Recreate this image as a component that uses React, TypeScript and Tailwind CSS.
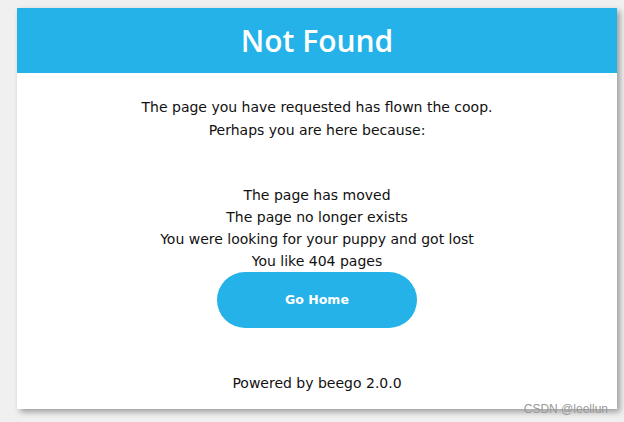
import React from 'react';

const reasons = [
  'The page has moved',
  'The page no longer exists',
  'You were looking for your puppy and got lost',
  'You like 404 pages',
];

const App = () => {
  return (
    <div className="relative h-[422px] w-[624px] overflow-hidden bg-[#f0f0f0] pt-[8px] pl-[17px] font-['DejaVu_Sans',sans-serif] text-[#111]">
      <div className="w-[600px] h-[401px] bg-white shadow-[3px_3px_6px_rgba(0,0,0,0.35)]">
        <div className="h-[65px] bg-[#24b2e9] flex items-center justify-center">
          <h1 className="text-[30px] font-semibold text-white font-['Open_Sans',sans-serif] leading-none">
            Not Found
          </h1>
        </div>
        <div className="flex flex-col items-center text-[14px]">
          <p className="mt-[23px] leading-[23px] text-center">
            The page you have requested has flown the coop.
            <br />
            Perhaps you are here because:
          </p>
          <ul className="mt-[42px] leading-[22px] text-center">
            {reasons.map((r) => (
              <li key={r}>{r}</li>
            ))}
          </ul>
          <button className="h-[56px] w-[200px] rounded-full bg-[#24b2e9] text-white text-[12.5px] font-bold">
            Go Home
          </button>
          <p className="mt-[44px] leading-[22px]">Powered by beego 2.0.0</p>
        </div>
      </div>
      <span className="absolute right-[16px] bottom-[4px] font-['Liberation_Sans',sans-serif] text-[12px] text-[#999]">
        CSDN @leellun
      </span>
    </div>
  );
};

export default App;
